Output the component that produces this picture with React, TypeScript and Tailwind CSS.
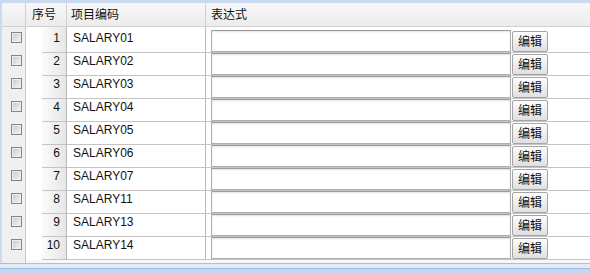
import React from "react";

const rows = [
  "SALARY01",
  "SALARY02",
  "SALARY03",
  "SALARY04",
  "SALARY05",
  "SALARY06",
  "SALARY07",
  "SALARY11",
  "SALARY13",
  "SALARY14",
];

const font = { fontFamily: '"Liberation Sans", "Noto Sans CJK SC", Arial, sans-serif' };

function Check() {
  return (
    <div className="w-[11px] h-[11px] border border-[#858585] bg-gradient-to-br from-[#c8c8c8] to-[#f6f6f6] shadow-[inset_0_0_0_1px_#eeeeee]" />
  );
}

export default function App() {
  return (
    <div
      className="w-[590px] h-[273px] overflow-hidden flex flex-col bg-[#dfe8f6] text-[12px] text-[#111]"
      style={font}
    >
      <div className="h-[3px] shrink-0 bg-[#c9daf1]" />
      <div className="flex flex-1 min-h-0">
        <div className="w-[2px] shrink-0 bg-[#c9daf1]" />
        <div className="flex-1 flex flex-col bg-white min-w-0">
          {/* header */}
          <div className="h-[24px] shrink-0 flex border-b border-[#d0d0d0] bg-gradient-to-b from-[#f7f7f7] to-[#ececec]">
            <div className="w-[24px] shrink-0 border-r border-[#d0d0d0]" />
            <div className="w-[41px] shrink-0 border-r border-[#d0d0d0] pl-[6px] flex items-center leading-[14px]">
              序号
            </div>
            <div className="w-[139px] shrink-0 border-r border-[#d0d0d0] pl-[4px] flex items-center leading-[14px]">
              项目编码
            </div>
            <div className="flex-1 pl-[5px] flex items-center leading-[14px]">表达式</div>
          </div>
          {/* spacer */}
          <div className="h-[3px] shrink-0 flex">
            <div className="w-[24px] shrink-0 bg-[#f0f0f0] border-r border-[#c8c8c8]" />
            <div className="w-[41px] shrink-0 border-r border-[#b8b8b8] flex">
              <div className="w-[16px]" />
              <div className="flex-1 bg-gradient-to-r from-[#fbfbfb] to-[#e6e6e6]" />
            </div>
            <div className="w-[139px] shrink-0 border-r border-[#b8b8b8]" />
            <div className="flex-1" />
          </div>
          {/* rows */}
          {rows.map((code, i) => (
            <div key={code} className="h-[23px] shrink-0 flex">
              <div className="w-[24px] shrink-0 bg-[#f0f0f0] border-r border-[#c8c8c8] pl-[9px] pt-[2px]">
                <Check />
              </div>
              <div className="w-[41px] shrink-0 border-r border-[#b8b8b8] flex">
                <div className="w-[16px]" />
                <div className="flex-1 bg-gradient-to-r from-[#fbfbfb] to-[#e6e6e6] border-b border-[#c4c4c4] text-right pr-[6px] pt-[1px] leading-[14px]">
                  {i + 1}
                </div>
              </div>
              <div className="w-[139px] shrink-0 border-r border-[#b8b8b8] border-b border-b-[#c4c4c4] pl-[6px] pt-[1px] leading-[14px]">
                {code}
              </div>
              <div className="flex-1 border-b border-[#c4c4c4] flex items-start pl-[5px]">
                <div className="w-[300px] h-[22px] shrink-0 bg-white border border-[#aeaeae] border-t-[#9c9c9c] shadow-[inset_0_1px_2px_#e2e2e2]" />
                <div className="ml-[1px] mt-[1px] w-[36px] h-[21px] shrink-0 rounded-[2px] border border-[#a5a5a5] bg-gradient-to-b from-[#fdfdfd] to-[#e0e0e0] flex items-center justify-center leading-[14px]">
                  编辑
                </div>
              </div>
            </div>
          ))}
          {/* bottom light area */}
          <div className="flex-1 flex">
            <div className="w-[24px] shrink-0 bg-[#f0f0f0] border-r border-[#c8c8c8]" />
            <div className="flex-1 bg-[#f7f7f7]" />
          </div>
        </div>
      </div>
      <div className="h-[1px] shrink-0 bg-[#a7c0e4]" />
      <div className="h-[4px] shrink-0 bg-[#e2ebf7]" />
      <div className="h-[1px] shrink-0 bg-[#99bbe8]" />
      <div className="h-[4px] shrink-0 bg-[#c6d8f0]" />
    </div>
  );
}
